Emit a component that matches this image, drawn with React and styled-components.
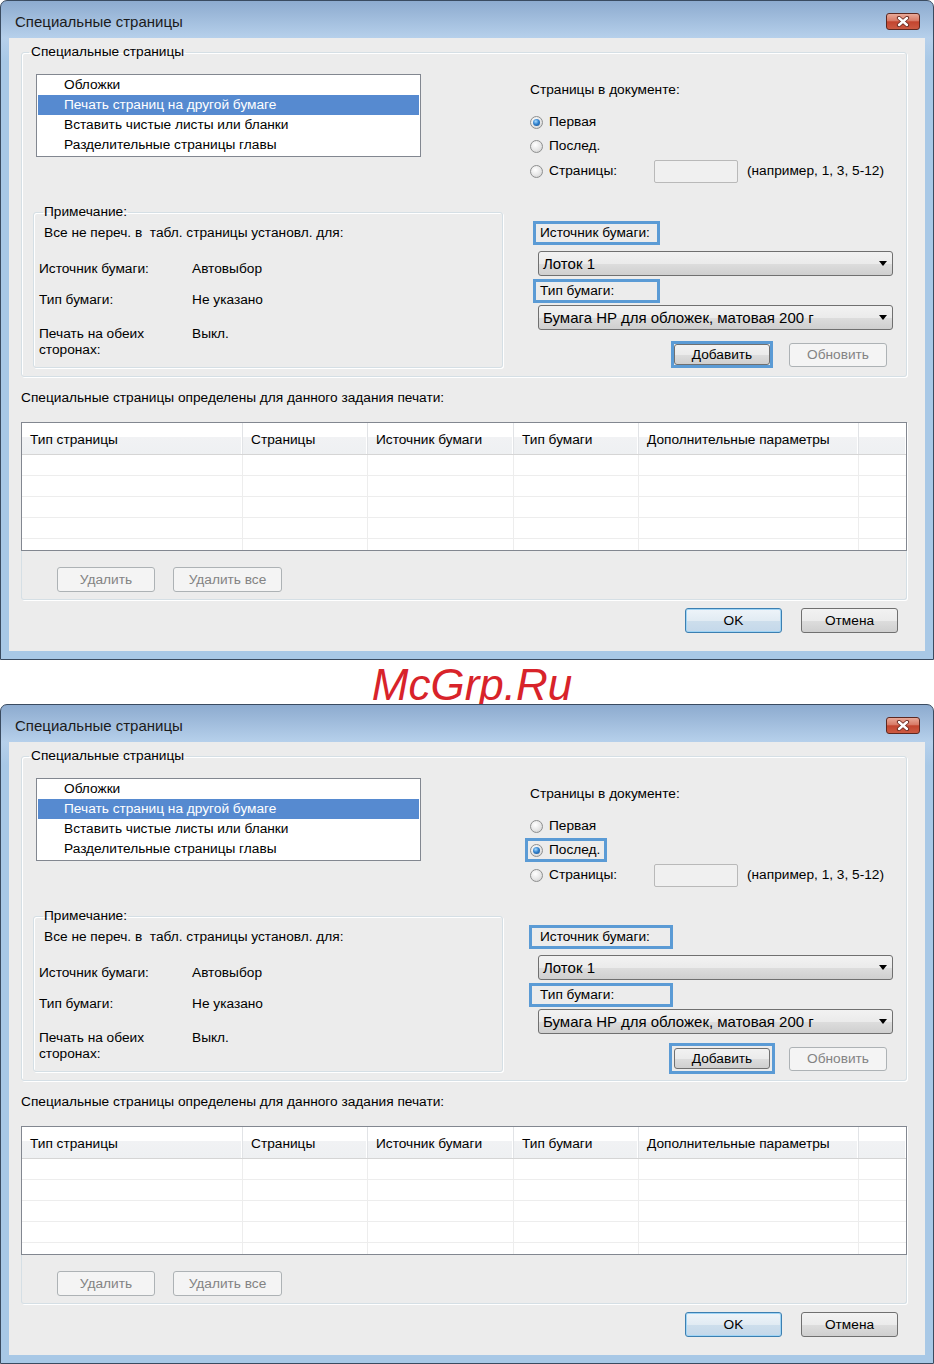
import React from "react";
import styled, { createGlobalStyle } from "styled-components";

const GlobalStyle = createGlobalStyle`
  body {
    margin: 0;
    background: #fff;
    font-family: "Liberation Sans", Arial, sans-serif;
    font-size: 13.7px;
    color: #000;
  }
`;

const Page = styled.div`
  width: 934px;
  display: flex;
  flex-direction: column;
`;

const Window = styled.div`
  box-sizing: border-box;
  height: 660px;
  display: flex;
  flex-direction: column;
  padding: 0 8px 8px;
  border: 1px solid #3a4b60;
  border-radius: 7px 7px 0 0;
  background: linear-gradient(180deg, #8dabcf 0px, #b6d0eb 37px, #a8c8e6 60px, #a8c8e6 100%);
`;

const TitleBar = styled.div`
  height: 37px;
  box-sizing: border-box;
  padding: 4px 5px 0 6px;
  display: flex;
  align-items: center;
  justify-content: space-between;
`;

const Title = styled.span`
  font-size: 15px;
  color: #1b1b1b;
`;

const CloseButton = styled.span`
  width: 34px;
  height: 17px;
  box-sizing: border-box;
  border: 1px solid #5d2820;
  border-radius: 3px;
  background: linear-gradient(180deg, #e9a998 0%, #d87a66 45%, #c3452f 52%, #cc5a42 100%);
  display: flex;
  align-items: center;
  justify-content: center;
`;

const Client = styled.div`
  flex: 1;
  background: #ececec;
  padding: 6px 18px 0 12px;
  display: flex;
  flex-direction: column;
`;

const Group = styled.fieldset`
  margin: 0;
  min-width: 0;
  padding: 14px 13px 8px 11px;
  border: 1px solid #d5dfe5;
  border-radius: 3px;
  box-shadow: inset 1px 1px 0 #fff, 1px 1px 0 #fff;
`;

const GroupLegend = styled.legend`
  padding: 0 2px;
  margin-left: -4px;
  line-height: 16px;
`;

const GroupBody = styled.div`
  display: grid;
  grid-template-columns: 470px 363px;
  column-gap: 27px;
`;

const LeftColumn = styled.div`
  display: flex;
  flex-direction: column;
`;

const ListBox = styled.div`
  box-sizing: border-box;
  width: 385px;
  height: 83px;
  margin-left: 3px;
  padding: 0 1px;
  background: #fff;
  border: 1px solid #828790;
`;

const ListItem = styled.div`
  height: 20px;
  line-height: 20px;
  padding-left: 26px;
  background: ${(p) => (p.$selected ? "#568ad0" : "transparent")};
  color: ${(p) => (p.$selected ? "#fff" : "#000")};
`;

const NoteBox = styled.fieldset`
  margin: 47px 0 0;
  min-width: 0;
  padding: 5px 10px 9px 5px;
  border: 1px solid #d5dfe5;
  border-radius: 3px;
  box-shadow: inset 1px 1px 0 #fff, 1px 1px 0 #fff;
`;

const NoteLegend = styled.legend`
  padding: 0 1px;
  margin-left: 4px;
  line-height: 16px;
`;

const NoteIntro = styled.div`
  margin-left: 5px;
  line-height: 16px;
`;

const NoteRow = styled.div`
  display: grid;
  grid-template-columns: 153px 1fr;
  margin-top: ${(p) => p.$gap}px;
  line-height: 16px;
`;

const RightColumn = styled.div`
  display: flex;
  flex-direction: column;
`;

const Heading = styled.div`
  margin-top: 8px;
  line-height: 16px;
`;

const RadioList = styled.div`
  margin-top: 12px;
  display: flex;
  flex-direction: column;
`;

const RadioRow = styled.div`
  box-sizing: border-box;
  height: ${(p) => (p.$tall ? 26 : 24)}px;
  display: flex;
  align-items: center;
  gap: 6px;
  align-self: flex-start;
  ${(p) =>
    p.$marked &&
    `
    border: 3px solid #5b9bd5;
    margin-left: -5px;
    padding: 0 4px 0 2px;
  `}
`;

const Radio = styled.span`
  box-sizing: border-box;
  width: 13px;
  height: 13px;
  border-radius: 50%;
  border: 1px solid #8e8f8f;
  background: radial-gradient(circle at 40% 35%, #ffffff 0%, #e6e6e6 55%, #c9c9c9 100%);
  display: inline-flex;
  align-items: center;
  justify-content: center;
  &::after {
    content: "";
    width: 7px;
    height: 7px;
    border-radius: 50%;
    display: ${(p) => (p.$checked ? "block" : "none")};
    background: radial-gradient(circle at 40% 35%, #a9dcff 0%, #3383cf 45%, #144a86 100%);
  }
`;

const RadioLabel = styled.span`
  line-height: 16px;
  width: ${(p) => (p.$width ? `${p.$width}px` : "auto")};
`;

const PageInput = styled.span`
  box-sizing: border-box;
  width: 84px;
  height: 23px;
  margin-left: -6px;
  border: 1px solid #b9b9b9;
  border-radius: 2px;
  background: #f0f0f0;
`;

const Hint = styled.span`
  margin-left: 3px;
  line-height: 16px;
`;

const FieldTag = styled.div`
  box-sizing: border-box;
  align-self: flex-start;
  width: ${(p) => (p.$wide ? 144 : 127)}px;
  height: 24px;
  line-height: 18px;
  margin-top: ${(p) => p.$gap}px;
  margin-left: ${(p) => (p.$wide ? -1 : 3)}px;
  padding-left: ${(p) => (p.$wide ? 8 : 4)}px;
  border: 3px solid #5b9bd5;
`;

const Combo = styled.div`
  box-sizing: border-box;
  height: 25px;
  margin: ${(p) => p.$gap}px 0 0 8px;
  padding: 0 5px 0 4px;
  display: flex;
  align-items: center;
  justify-content: space-between;
  font-size: 15px;
  border: 1px solid #707070;
  border-radius: 3px;
  background: linear-gradient(180deg, #f2f2f2 0%, #ebebeb 50%, #dddddd 51%, #cfcfcf 100%);
`;

const ComboArrow = styled.span`
  width: 0;
  height: 0;
  border-left: 4px solid transparent;
  border-right: 4px solid transparent;
  border-top: 5px solid #000;
`;

const ButtonRow = styled.div`
  height: 27px;
  margin-top: 11px;
  padding-right: 6px;
  display: flex;
  align-items: center;
  justify-content: flex-end;
`;

const Highlight = styled.span`
  display: inline-flex;
  border: 3px solid #5b9bd5;
  padding: ${(p) => (p.$loose ? 2 : 0)}px;
  margin-right: ${(p) => (p.$loose ? 14 : 16)}px;
`;

const Button = styled.span`
  box-sizing: border-box;
  width: ${(p) => p.$w || 97}px;
  height: ${(p) => p.$h || 25}px;
  display: inline-flex;
  align-items: center;
  justify-content: center;
  border: 1px solid #707070;
  border-radius: 3px;
  background: linear-gradient(180deg, #f2f2f2 0%, #ebebeb 50%, #dddddd 51%, #cfcfcf 100%);
  color: #000;

  ${(p) =>
    p.$disabled &&
    `
    border-color: #adb2b5;
    background: #f4f4f4;
    color: #838383;
  `}

  ${(p) =>
    p.$default &&
    `
    border-color: #3c7fb1;
    box-shadow: inset 0 0 0 1px #9fd4f5;
    background: linear-gradient(180deg, #eef4f9 0%, #e1ebf3 50%, #cddeec 51%, #c4d8ea 100%);
  `}
`;

const Caption = styled.div`
  margin-top: 13px;
  line-height: 16px;
`;

const Panel = styled.div`
  margin-top: 16px;
  border: 1px solid #d5dfe5;
  border-top: none;
  border-radius: 0 0 3px 3px;
  box-shadow: 1px 1px 0 #fff;
`;

const Table = styled.div`
  box-sizing: border-box;
  height: 129px;
  margin: 0 -1px;
  border: 1px solid #828790;
  background: #fff;
  overflow: hidden;
`;

const columns = "221px 125px 146px 125px 220px 1fr";

const HeadRow = styled.div`
  display: grid;
  grid-template-columns: ${columns};
  height: 32px;
  box-sizing: border-box;
  border-bottom: 1px solid #d5d5d5;
  background: linear-gradient(180deg, #ffffff 0%, #ffffff 45%, #f1f2f4 46%, #eef0f2 100%);
`;

const HeadCell = styled.div`
  display: flex;
  align-items: center;
  padding: 2px 0 0 8px;
  border-right: 1px solid #e1e3e6;
  box-shadow: inset -1px 0 0 #fff;
  &:last-child {
    border-right: none;
  }
`;

const BodyRow = styled.div`
  display: grid;
  grid-template-columns: ${columns};
  height: 21px;
  box-sizing: border-box;
  border-bottom: 1px solid #ededed;
`;

const BodyCell = styled.div`
  border-right: 1px solid #ededed;
  &:last-child {
    border-right: none;
  }
`;

const PanelButtons = styled.div`
  display: flex;
  gap: 18px;
  padding: 16px 0 7px 35px;
`;

const Footer = styled.div`
  margin-top: 8px;
  padding-right: 9px;
  display: flex;
  justify-content: flex-end;
  gap: 19px;
`;

const Watermark = styled.div`
  height: 44px;
  line-height: 50px;
  padding-left: 10px;
  text-align: center;
  font-family: "Liberation Sans", Arial, sans-serif;
  font-style: italic;
  font-size: 44px;
  color: #d8232a;
`;

const pageTypes = [
  "Обложки",
  "Печать страниц на другой бумаге",
  "Вставить чистые листы или бланки",
  "Разделительные страницы главы",
];

const headers = [
  "Тип страницы",
  "Страницы",
  "Источник бумаги",
  "Тип бумаги",
  "Дополнительные параметры",
  "",
];

function CloseGlyph() {
  return (
    <svg width="14" height="11" viewBox="0 0 14 11">
      <path d="M3 2 L11 9 M11 2 L3 9" stroke="#6a2a20" strokeWidth="4.2" strokeLinecap="round" />
      <path d="M3 2 L11 9 M11 2 L3 9" stroke="#fff" strokeWidth="2.4" strokeLinecap="round" />
    </svg>
  );
}

function Dialog({ last }) {
  return (
    <Window>
      <TitleBar>
        <Title>Специальные страницы</Title>
        <CloseButton>
          <CloseGlyph />
        </CloseButton>
      </TitleBar>
      <Client>
        <Group>
          <GroupLegend>Специальные страницы</GroupLegend>
          <GroupBody>
            <LeftColumn>
              <ListBox>
                {pageTypes.map((t, i) => (
                  <ListItem key={t} $selected={i === 1}>
                    {t}
                  </ListItem>
                ))}
              </ListBox>
              <NoteBox>
                <NoteLegend>Примечание:</NoteLegend>
                <NoteIntro>Все не переч. в&nbsp; табл. страницы установл. для:</NoteIntro>
                <NoteRow $gap={20}>
                  <span>Источник бумаги:</span>
                  <span>Автовыбор</span>
                </NoteRow>
                <NoteRow $gap={15}>
                  <span>Тип бумаги:</span>
                  <span>Не указано</span>
                </NoteRow>
                <NoteRow $gap={18}>
                  <span>
                    Печать на обеих
                    <br />
                    сторонах:
                  </span>
                  <span>Выкл.</span>
                </NoteRow>
              </NoteBox>
            </LeftColumn>

            <RightColumn>
              <Heading>Страницы в документе:</Heading>
              <RadioList>
                <RadioRow>
                  <Radio $checked={!last} />
                  <RadioLabel>Первая</RadioLabel>
                </RadioRow>
                <RadioRow $marked={last}>
                  <Radio $checked={last} />
                  <RadioLabel>Послед.</RadioLabel>
                </RadioRow>
                <RadioRow $tall>
                  <Radio />
                  <RadioLabel $width={105}>Страницы:</RadioLabel>
                  <PageInput />
                  <Hint>(например, 1, 3, 5-12)</Hint>
                </RadioRow>
              </RadioList>

              <FieldTag $gap={37} $wide={last}>Источник бумаги:</FieldTag>
              <Combo $gap={6}>
                <span>Лоток 1</span>
                <ComboArrow />
              </Combo>
              <FieldTag $gap={3} $wide={last}>Тип бумаги:</FieldTag>
              <Combo $gap={2}>
                <span>Бумага HP для обложек, матовая 200 г</span>
                <ComboArrow />
              </Combo>

              <ButtonRow>
                <Highlight $loose={last}>
                  <Button $w={96} $h={21}>Добавить</Button>
                </Highlight>
                <Button $w={98} $h={24} $disabled>
                  Обновить
                </Button>
              </ButtonRow>
            </RightColumn>
          </GroupBody>
        </Group>

        <Caption>Специальные страницы определены для данного задания печати:</Caption>

        <Panel>
          <Table>
            <HeadRow>
              {headers.map((h, i) => (
                <HeadCell key={i}>{h}</HeadCell>
              ))}
            </HeadRow>
            {[0, 1, 2, 3, 4].map((r) => (
              <BodyRow key={r}>
                {headers.map((_, i) => (
                  <BodyCell key={i} />
                ))}
              </BodyRow>
            ))}
          </Table>
          <PanelButtons>
            <Button $w={98} $disabled>
              Удалить
            </Button>
            <Button $w={109} $disabled>
              Удалить все
            </Button>
          </PanelButtons>
        </Panel>

        <Footer>
          <Button $default>OK</Button>
          <Button>Отмена</Button>
        </Footer>
      </Client>
    </Window>
  );
}

export default function App() {
  return (
    <Page>
      <GlobalStyle />
      <Dialog />
      <Watermark>McGrp.Ru</Watermark>
      <Dialog last />
    </Page>
  );
}
